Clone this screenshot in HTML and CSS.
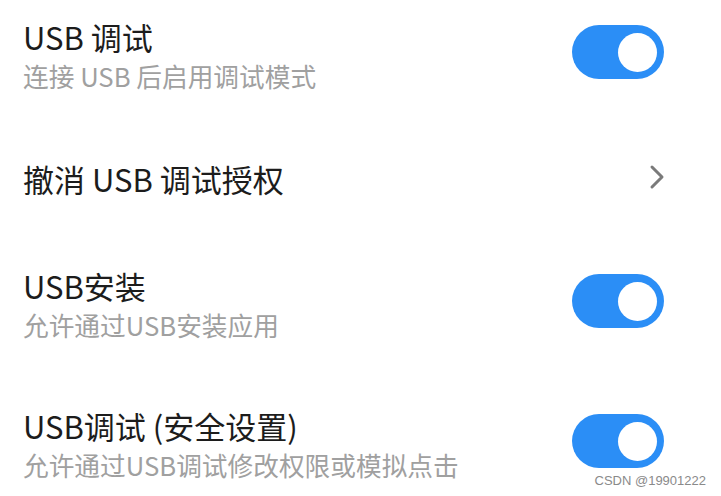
FILE: index.html
```html
<!DOCTYPE html>
<html lang="zh-CN">
<head>
<meta charset="utf-8">
<link rel="stylesheet" href="styles.css">
</head>
<body>
<div class="list">
  <div class="item two first">
    <div class="text">
      <div class="title">USB 调试</div>
      <div class="sub">连接 USB 后启用调试模式</div>
    </div>
    <div class="switch"><span class="knob"></span></div>
  </div>
  <div class="item one">
    <div class="text">
      <div class="title">撤消 USB 调试授权</div>
    </div>
    <svg class="chev" width="16" height="26" viewBox="0 0 16 26"><polyline points="3,3 13,13 3,23" fill="none" stroke="#7a7a7a" stroke-width="3" stroke-linecap="round" stroke-linejoin="round"/></svg>
  </div>
  <div class="item two">
    <div class="text">
      <div class="title">USB安装</div>
      <div class="sub">允许通过USB安装应用</div>
    </div>
    <div class="switch"><span class="knob"></span></div>
  </div>
  <div class="item two">
    <div class="text">
      <div class="title">USB调试 (安全设置)</div>
      <div class="sub">允许通过USB调试修改权限或模拟点击</div>
    </div>
    <div class="switch"><span class="knob"></span></div>
  </div>
</div>
<div class="mark">CSDN @19901222</div>
</body>
</html>
```
FILE: styles.css
```css
html, body {
  margin: 0;
  padding: 0;
  background: #ffffff;
  width: 721px;
  height: 496px;
  overflow: hidden;
  font-family: "Noto Sans CJK SC", "Noto Sans", sans-serif;
}
.list {
  display: flex;
  flex-direction: column;
}
.item {
  display: flex;
  align-items: center;
  justify-content: space-between;
  padding: 31px 57px 31px 23px;
}
.item.first {
  padding-top: 17px;
}
.item.one {
  padding-top: 33px;
  padding-bottom: 37px;
}
.text {
  display: flex;
  flex-direction: column;
}
.title {
  font-size: 31px;
  line-height: 39px;
  color: #1c1c1c;
  white-space: nowrap;
}
.sub {
  font-size: 25.7px;
  line-height: 39px;
  color: #a0a0a0;
  white-space: nowrap;
}
.switch {
  width: 92px;
  height: 54px;
  border-radius: 27px;
  background: #2b8ef6;
  display: flex;
  align-items: center;
  justify-content: flex-end;
  padding-right: 7px;
  box-sizing: border-box;
  margin-bottom: 8px;
}
.knob {
  width: 39px;
  height: 39px;
  border-radius: 50%;
  background: #ffffff;
}
.chev {
  margin-right: -1px;
  margin-bottom: 4px;
}
.mark {
  position: absolute;
  right: 15px;
  bottom: 8px;
  font-family: "Liberation Sans", Arial, sans-serif;
  font-size: 13px;
  line-height: 14px;
  color: #8a8a8a;
}
```
